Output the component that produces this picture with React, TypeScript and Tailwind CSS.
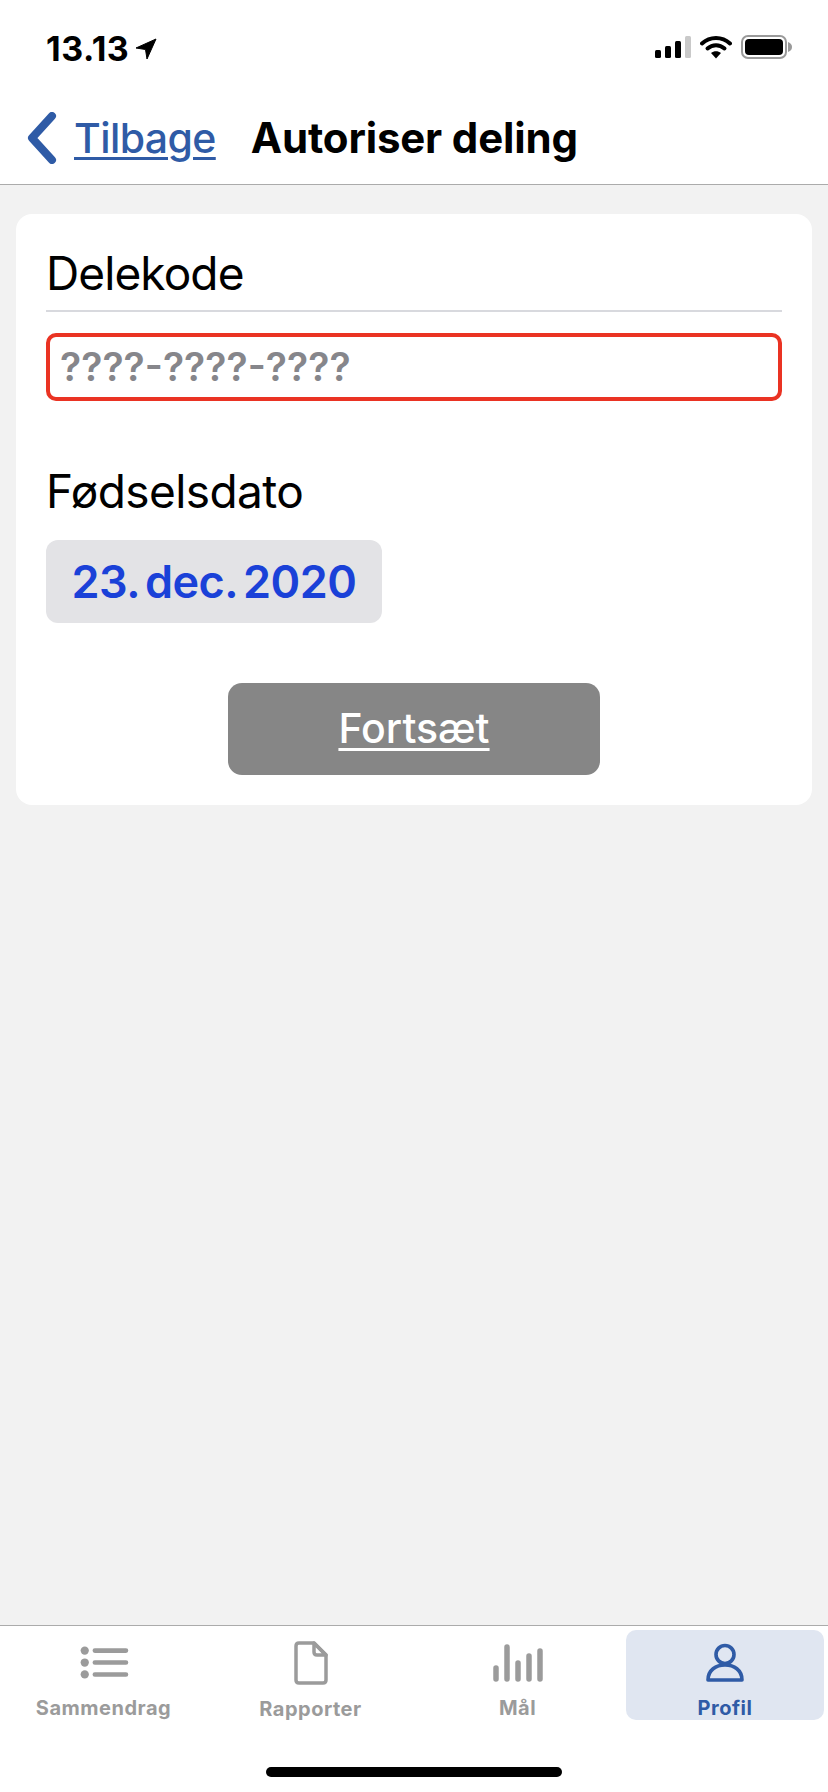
export default function App() {
  const font = { fontFamily: "Inter, 'Noto Sans', sans-serif" };
  return (
    <div style={font} className="w-[828px] h-[1792px] flex flex-col bg-[#f2f2f2] overflow-hidden text-black">
      <div className="h-[185px] shrink-0 bg-white border-b border-[#ababab] flex flex-col">
        <div className="h-[100px] shrink-0 flex items-start justify-between pl-[46px] pr-[36px] pt-[29px]">
          <div className="flex items-center gap-[6px]">
            <span className="text-[34px] leading-[40px] font-bold tracking-[0.5px]">13.13</span>
            <svg width="22" height="22" viewBox="0 0 22 22"><path d="M21 1 L1 10 L10.5 11.5 L12 21 Z" fill="#000" stroke="#000" strokeWidth="1" strokeLinejoin="round" /></svg>
          </div>
          <div className="flex items-center gap-[9px] pt-[6px]">
            <svg width="36" height="24" viewBox="0 0 36 24">
              <rect x="0" y="15" width="6" height="8" rx="1.5" fill="#000" />
              <rect x="10" y="11" width="6" height="12" rx="1.5" fill="#000" />
              <rect x="20" y="6" width="6" height="17" rx="1.5" fill="#000" />
              <rect x="30" y="1" width="6" height="22" rx="1.5" fill="#c9c9c9" />
            </svg>
            <svg width="32" height="24" viewBox="0 0 32 24">
              <path d="M2 8.5 C10 1 22 1 30 8.5" fill="none" stroke="#000" strokeWidth="4" strokeLinecap="round" />
              <path d="M7.5 13.5 C12.5 9 19.5 9 24.5 13.5" fill="none" stroke="#000" strokeWidth="4" strokeLinecap="round" />
              <path d="M16 23.5 L11 18 C14 15.5 18 15.5 21 18 Z" fill="#000" />
            </svg>
            <div className="flex items-center">
              <div className="w-[46px] h-[24px] rounded-[7px] border-2 border-[#9a9a9a] p-[2px]">
                <div className="w-full h-full rounded-[4px] bg-black" />
              </div>
              <svg width="4" height="10" viewBox="0 0 4 10" className="ml-[1px]"><path d="M0 0 C3 1 4 3 4 5 C4 7 3 9 0 10 Z" fill="#9a9a9a" /></svg>
            </div>
          </div>
        </div>
        <div className="flex items-center pl-[26px] h-[76px]">
          <svg width="32" height="52" viewBox="0 0 32 52" className="shrink-0">
            <path d="M26 4 L6 26 L26 48" fill="none" stroke="#2f5ba6" strokeWidth="8" strokeLinecap="round" strokeLinejoin="round" />
          </svg>
          <span className="ml-[16px] text-[41px] leading-[44px] font-medium text-[#2f5ba6] underline underline-offset-[4px] decoration-[3px] tracking-[-0.6px]">Tilbage</span>
          <span className="ml-[35px] text-[42px] leading-[44px] font-bold tracking-[-0.15px]">Autoriser deling</span>
        </div>
      </div>

      <main className="flex-1 px-[16px] pt-[29px]">
        <div className="h-[591px] bg-white rounded-[16px] px-[30px] pt-[28px] flex flex-col">
          <div className="text-[46px] leading-[62px] h-[70px] border-b-2 border-[#d8d9de] tracking-[-0.9px]">Delekode</div>
          <div className="mt-[21px] h-[68px] rounded-[10px] border-[4px] border-[#ea3323] flex items-center pl-[10px] text-[39px] font-semibold text-[#86868b]">????-????-????</div>
          <div className="mt-[63px] text-[46px] leading-[54px] tracking-[-0.6px]">Fødselsdato</div>
          <div className="mt-[22px] w-[336px] h-[83px] rounded-[12px] bg-[#e3e3e6] flex items-center justify-center text-[45px] font-semibold text-[#1a41d8] tracking-[-0.5px] [word-spacing:-5px]">23. dec. 2020</div>
          <div className="mt-[60px] self-center w-[372px] h-[92px] rounded-[14px] bg-[#868686] flex items-center justify-center text-[41px] font-medium text-white underline underline-offset-[5px] decoration-[3px]">Fortsæt</div>
        </div>
      </main>

      <nav className="h-[167px] shrink-0 bg-white border-t border-[#ababab] relative">
        <div className="flex h-[95px] pt-[4px]">
          <Tab label="Sammendrag">
            <svg width="50" height="33" viewBox="0 0 52 36">
              <circle cx="5" cy="5" r="4.5" fill="#9b9b9b" /><circle cx="5" cy="18" r="4.5" fill="#9b9b9b" /><circle cx="5" cy="31" r="4.5" fill="#9b9b9b" />
              <path d="M16 5H50M16 18H50M16 31H50" stroke="#9b9b9b" strokeWidth="5" strokeLinecap="round" />
            </svg>
          </Tab>
          <Tab label="Rapporter">
            <svg width="34" height="44" viewBox="0 0 34 44">
              <path d="M5 2 H20 L32 14 V39 C32 41 31 42 29 42 H5 C3 42 2 41 2 39 V5 C2 3 3 2 5 2 Z" fill="none" stroke="#9b9b9b" strokeWidth="3.5" strokeLinejoin="round" />
              <path d="M20 2 V11 C20 13 21 14 23 14 H32 Z" fill="none" stroke="#9b9b9b" strokeWidth="3.5" strokeLinejoin="round" />
            </svg>
          </Tab>
          <Tab label="Mål">
            <svg width="50" height="38" viewBox="0 0 50 38">
              <path d="M3 24V35M14 3V35M25 19V35M36 12V35M47 7V35" stroke="#9b9b9b" strokeWidth="5.5" strokeLinecap="round" />
            </svg>
          </Tab>
          <Tab label="Profil" active>
            <svg width="38" height="40" viewBox="0 0 38 40">
              <circle cx="19" cy="11.5" r="9" fill="none" stroke="#2f5ba6" strokeWidth="3.6" />
              <path d="M2 37 C2 27 10 22 19 22 C28 22 36 27 36 37 Z" fill="none" stroke="#2f5ba6" strokeWidth="3.6" strokeLinejoin="round" />
            </svg>
          </Tab>
        </div>
        <div className="absolute left-[266px] top-[141px] w-[296px] h-[10px] rounded-full bg-black" />
      </nav>
    </div>
  );
}

function Tab({ label, active, children }: { label: string; active?: boolean; children: React.ReactNode }) {
  return (
    <div className={`flex flex-col items-center rounded-[10px] h-[90px] pt-[11px] overflow-hidden ${active ? "w-[198px] ml-[5px] bg-[#e0e6f1] text-[#2f5ba6]" : "w-[207px] text-[#9b9b9b]"}`}>
      <div className="h-[44px] flex items-center justify-center">{children}</div>
      <div className="mt-[12px] text-[20px] leading-[24px] font-bold tracking-[0.5px]">{label}</div>
    </div>
  );
}
